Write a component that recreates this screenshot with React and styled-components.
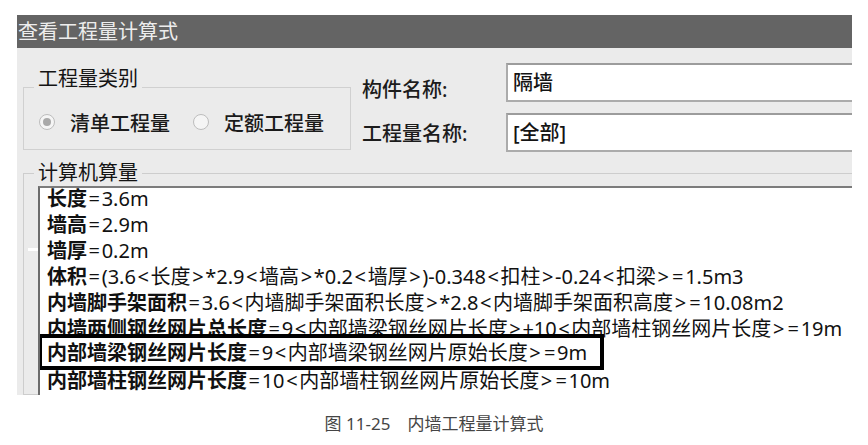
import styled, { createGlobalStyle } from "styled-components";

const GlobalStyle = createGlobalStyle`
  html, body {
    margin: 0;
    background: #fff;
  }
  body {
    font-family: "Noto Sans", "Noto Sans CJK SC", sans-serif;
  }
`;

const Page = styled.div`
  width: 868px;
  height: 445px;
  overflow: hidden;
`;

const Window = styled.div`
  width: 835px;
  height: 380px;
  margin: 15px 0 0 17px;
  background: #ebebeb;
  overflow: hidden;
  display: flex;
  flex-direction: column;
`;

const TitleBar = styled.div`
  flex: none;
  height: 33px;
  padding-left: 1px;
  background: #646464;
  color: #ededed;
  font-size: 20px;
  line-height: 33px;
`;

const TopArea = styled.div`
  display: flex;
  align-items: flex-start;
  gap: 11px;
  padding: 15px 0 0 6px;
`;

const Group = styled.fieldset`
  margin: 0;
  min-width: 0;
  border: 1px solid #d0d0d0;
`;

const KindGroup = styled(Group)`
  flex: none;
  width: 328px;
  box-sizing: border-box;
  margin-top: 6px;
  padding: 5px 0 15px 15px;
`;

const CalcGroup = styled(Group)`
  flex: 1;
  min-height: 0;
  margin: 11px -20px 0 6px;
  padding: 3px 0 0 14px;
  border-color: #cdcdcd;
`;

const Legend = styled.legend`
  margin-left: ${(p) => p.$shift}px;
  padding: 0 4px ${(p) => p.$drop}px;
  font-size: 20px;
  line-height: 20px;
  color: #141414;
`;

const RadioRow = styled.div`
  display: flex;
  align-items: center;
  height: 24px;
`;

const Option = styled.label`
  display: flex;
  align-items: center;
  margin-left: ${(p) => (p.$first ? 0 : 23)}px;
  font-size: 20px;
  font-weight: 500;
  color: #1a1a1a;
`;

const Radio = styled.span`
  width: 16px;
  height: 16px;
  box-sizing: border-box;
  border-radius: 50%;
  border: 1px solid #bdbdbd;
  background: #f5f5f5;
  margin-right: 15px;
  display: flex;
  align-items: center;
  justify-content: center;
  &::after {
    content: "";
    width: 8px;
    height: 8px;
    border-radius: 50%;
    background: ${(p) => (p.$checked ? "#a9a9a9" : "transparent")};
  }
`;

const Fields = styled.div`
  flex: 1;
  margin-right: -30px;
  display: grid;
  grid-template-columns: 144px 1fr;
  grid-auto-rows: 39px;
  row-gap: 11px;
`;

const FieldLabel = styled.div`
  align-self: center;
  padding-top: ${(p) => p.$shift || 0}px;
  font-size: 20px;
  font-weight: 500;
  color: #1c1c1c;
`;

const TextBox = styled.div`
  box-sizing: border-box;
  border: 2px solid #ababab;
  border-top-color: #9c9c9c;
  background: #fff;
  padding-left: 5px;
  font-size: 20px;
  font-weight: 500;
  line-height: 35px;
  color: #141414;
`;

const List = styled.div`
  position: relative;
  height: 320px;
  background: #fff;
  border-top: 2px solid #7c7c7c;
  border-left: 2px solid #6c6c6c;
  /* little splitter grip sticking out on the left */
  &::before {
    content: "";
    position: absolute;
    left: -12px;
    top: 60px;
    width: 10px;
    height: 3px;
    background: #fff;
  }
`;

const Lines = styled.div`
  height: 100%;
  overflow: hidden;
`;

const Line = styled.div`
  padding-left: 7px;
  font-size: 20px;
  line-height: 26px;
  white-space: nowrap;
  color: #111;
  &:first-child {
    margin-top: -2.5px;
  }
`;

const MarkedLine = styled(Line)`
  position: relative;
  width: 566px;
  box-sizing: border-box;
  margin: -7.5px 0 -2.5px -2px;
  padding: 2px 0 0 5px;
  border: 4px solid #000;
  background: #fff;
`;

const Name = styled.b`
  font-weight: 700;
`;

const Sym = styled.span`
  margin: 0 1.6px;
`;

const Caption = styled.div`
  margin-top: 19px;
  text-align: center;
  font-size: 17px;
  line-height: 20px;
  color: #454545;
`;

const lines = [
  ["长度", "=3.6m"],
  ["墙高", "=2.9m"],
  ["墙厚", "=0.2m"],
  ["体积", "=(3.6<长度>*2.9<墙高>*0.2<墙厚>)-0.348<扣柱>-0.24<扣梁>=1.5m3"],
  ["内墙脚手架面积", "=3.6<内墙脚手架面积长度>*2.8<内墙脚手架面积高度>=10.08m2"],
  ["内墙两侧钢丝网片总长度", "=9<内部墙梁钢丝网片长度>+10<内部墙柱钢丝网片长度>=19m"],
  ["内部墙梁钢丝网片长度", "=9<内部墙梁钢丝网片原始长度>=9m", true],
  ["内部墙柱钢丝网片长度", "=10<内部墙柱钢丝网片原始长度>=10m"],
];

// the dialog's font sets <, > and = wider than ours, so give them some room
const spaced = (text) =>
  text.split(/([<>=])/).map((part, i) =>
    /^[<>=]$/.test(part) ? <Sym key={i}>{part}</Sym> : part
  );

export default function App() {
  return (
    <Page>
      <GlobalStyle />
      <Window>
        <TitleBar>查看工程量计算式</TitleBar>
        <TopArea>
          <KindGroup>
            <Legend $shift={-5} $drop={16}>
              工程量类别
            </Legend>
            <RadioRow>
              <Option $first>
                <Radio $checked />
                清单工程量
              </Option>
              <Option>
                <Radio />
                定额工程量
              </Option>
            </RadioRow>
          </KindGroup>
          <Fields>
            <FieldLabel $shift={12}>构件名称:</FieldLabel>
            <TextBox>隔墙</TextBox>
            <FieldLabel>工程量名称:</FieldLabel>
            <TextBox>[全部]</TextBox>
          </Fields>
        </TopArea>
        <CalcGroup>
          <Legend $shift={-4} $drop={0}>
            计算机算量
          </Legend>
          <List>
            <Lines>
              {lines.map(([name, rest, marked]) => {
                const Row = marked ? MarkedLine : Line;
                return (
                  <Row key={name}>
                    <Name>{name}</Name>
                    {spaced(rest)}
                  </Row>
                );
              })}
            </Lines>
          </List>
        </CalcGroup>
      </Window>
      <Caption>图 11-25　内墙工程量计算式</Caption>
    </Page>
  );
}
